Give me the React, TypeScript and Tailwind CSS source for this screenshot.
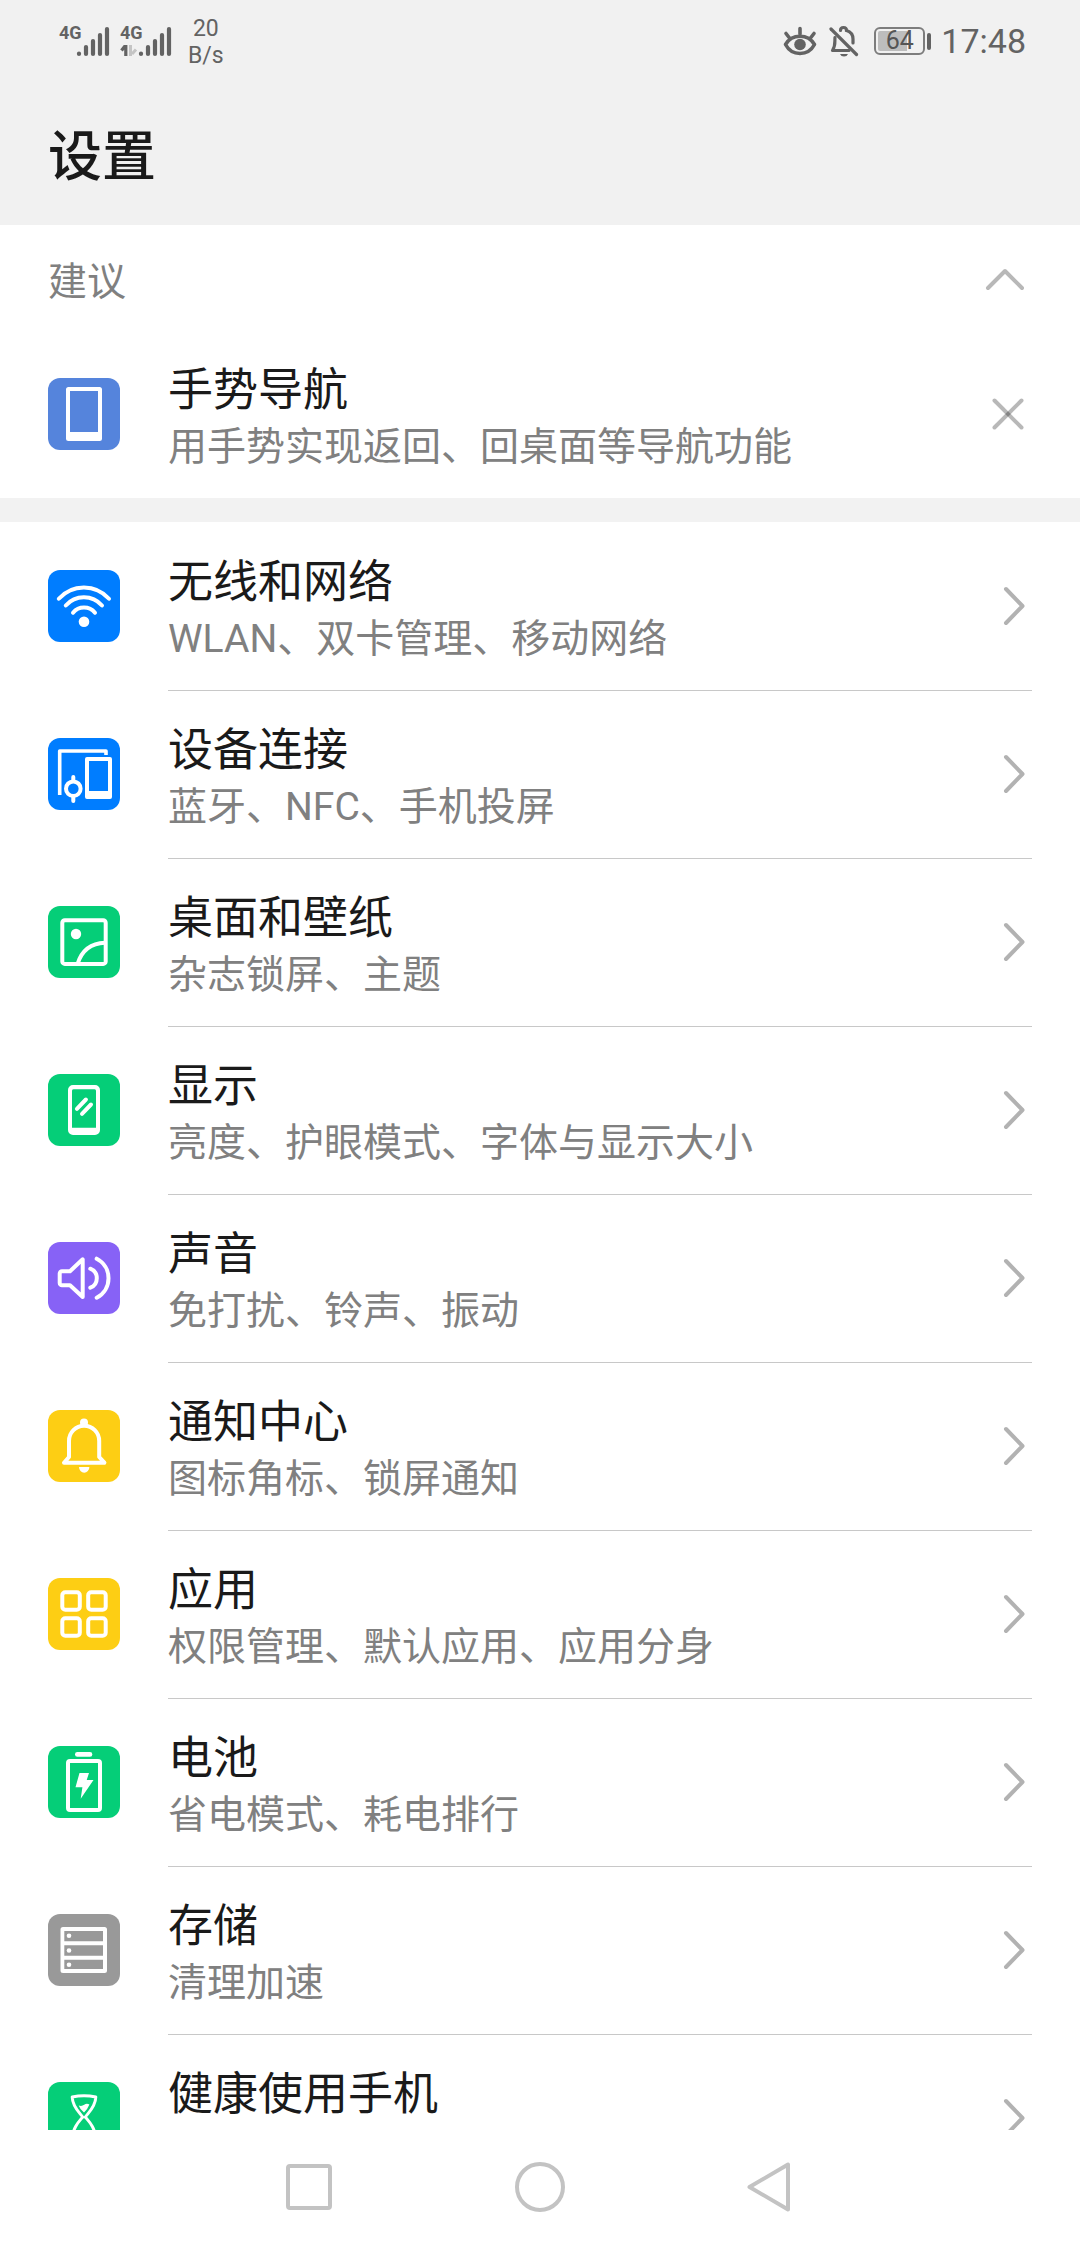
import type { ReactNode } from "react"

interface SettingItem {
  title: string
  summary?: string
  color: string
  icon: ReactNode
}

const WifiGlyph = () => (
  <>
    <path d="M10.8 28.7a33.5 33.5 0 0 1 50.2 0M17.8 35.5a24 24 0 0 1 36.2 0M25 42.7a14.2 14.2 0 0 1 22 0" />
    <circle cx="36" cy="51.7" r="5.3" fill="white" stroke="none" />
  </>
)

const DevicesGlyph = () => (
  <>
    <path d="M11.7 57V13H58v4" strokeWidth="3.6" strokeLinecap="butt" />
    <path
      d="M39 19h23a2 2 0 0 1 2 2v38a2 2 0 0 1-2 2H39a2 2 0 0 1-2-2V21a2 2 0 0 1 2-2ZM41 23v30h19V23Z"
      fill="white"
      stroke="none"
      fillRule="evenodd"
    />
    <circle cx="25.3" cy="50.7" r="7.3" />
    <path d="M25.3 39v4M25.3 59v4" />
  </>
)

const WallpaperGlyph = () => (
  <>
    <rect x="14.3" y="14.3" width="43.4" height="43.6" rx="2.5" />
    <circle cx="28" cy="28" r="5.2" fill="white" stroke="none" />
    <path d="M29.7 57.5Q36 37.5 57 36.7" />
  </>
)

const DisplayGlyph = () => (
  <>
    <path
      d="M25 11h22a5 5 0 0 1 5 5v40a5 5 0 0 1-5 5H25a5 5 0 0 1-5-5V16a5 5 0 0 1 5-5ZM25.5 15.3A1.5 1.5 0 0 0 24 17v36.7h24V17a1.5 1.5 0 0 0-1.5-1.7Z"
      fill="white"
      stroke="none"
      fillRule="evenodd"
    />
    <path d="M28.9 34.8l9-9.3M34 39.8l9-9.3" />
  </>
)

const SoundGlyph = () => (
  <>
    <path d="M14 29.3H22L34.7 17.3V55L22 43.3H14a2.3 2.3 0 0 1-2.3-2.3V31.6a2.3 2.3 0 0 1 2.3-2.3Z" />
    <path d="M42.3 26.7a10.2 10.2 0 0 1 0 19M48.7 16.7a22 22 0 0 1 0 39" />
  </>
)

const BellGlyph = () => (
  <>
    <path d="M16 52.7L21 47V31a15.1 15.3 0 0 1 30.2 0V47l5.2 5.7Z" />
    <path d="M31 57h10.4a5.2 5.7 0 0 1-10.4 0Z" fill="white" stroke="none" />
    <circle cx="36" cy="12.5" r="4" fill="white" stroke="none" />
  </>
)

const AppsGlyph = () => (
  <>
    <rect x="14.3" y="14.3" width="17.5" height="17.5" rx="3" />
    <rect x="40.2" y="14.3" width="17.5" height="17.5" rx="3" />
    <rect x="14.3" y="40.2" width="17.5" height="17.5" rx="3" />
    <rect x="40.2" y="40.2" width="17.5" height="17.5" rx="3" />
  </>
)

const BatteryGlyph = () => (
  <>
    <rect x="20" y="15" width="32" height="49" rx="2" />
    <rect x="27" y="6" width="17.3" height="4.7" rx="2.3" fill="white" stroke="none" />
    <path d="M31.5 27h9.5l-2.3 7h6.8L32.7 52.7l1.7-11.5h-6.9Z" fill="white" stroke="none" />
  </>
)

const StorageGlyph = () => (
  <>
    <path
      d="M15 13h41.5a2.5 2.5 0 0 1 2.5 2.5v41a2.5 2.5 0 0 1-2.5 2.5H15a2.5 2.5 0 0 1-2.5-2.5v-41A2.5 2.5 0 0 1 15 13ZM16.3 17v10.3H55V17ZM16.3 31.2v10.5H55V31.2ZM16.3 45.7V55H55v-9.3Z"
      fill="white"
      stroke="none"
      fillRule="evenodd"
    />
    <g fill="white" stroke="none">
      <circle cx="21" cy="21.8" r="2.3" />
      <circle cx="21" cy="36.5" r="2.3" />
      <circle cx="21" cy="50.7" r="2.3" />
    </g>
  </>
)

const HourglassGlyph = () => (
  <>
    <path
      d="M24.2 15Q36 12.5 47.8 15C47.5 25 40.5 30.5 37.3 35C41 39.5 47 45 47.8 57Q36 59.5 24.2 57C25 45 31 39.5 34.7 35C31.5 30.5 24.5 25 24.2 15Z"
      strokeWidth="3"
    />
    <path d="M30.7 23.5q3 1.2 5.5-.7t5.2-.3q-1.4 4-5.4 8-4-3-5.3-7Z" fill="white" stroke="none" />
  </>
)

const PhoneGlyph = () => (
  <path
    d="M20.5 9h31a2.5 2.5 0 0 1 2.5 2.5v49a2.5 2.5 0 0 1-2.5 2.5h-31a2.5 2.5 0 0 1-2.5-2.5v-49A2.5 2.5 0 0 1 20.5 9ZM22 13v41h28V13Z"
    fill="white"
    stroke="none"
    fillRule="evenodd"
  />
)

const items: SettingItem[] = [
  { title: "无线和网络", summary: "WLAN、双卡管理、移动网络", color: "bg-[#007dff]", icon: <WifiGlyph /> },
  { title: "设备连接", summary: "蓝牙、NFC、手机投屏", color: "bg-[#007dff]", icon: <DevicesGlyph /> },
  { title: "桌面和壁纸", summary: "杂志锁屏、主题", color: "bg-[#05ce78]", icon: <WallpaperGlyph /> },
  { title: "显示", summary: "亮度、护眼模式、字体与显示大小", color: "bg-[#05ce78]", icon: <DisplayGlyph /> },
  { title: "声音", summary: "免打扰、铃声、振动", color: "bg-[#8762f6]", icon: <SoundGlyph /> },
  { title: "通知中心", summary: "图标角标、锁屏通知", color: "bg-[#fdce14]", icon: <BellGlyph /> },
  { title: "应用", summary: "权限管理、默认应用、应用分身", color: "bg-[#fdce14]", icon: <AppsGlyph /> },
  { title: "电池", summary: "省电模式、耗电排行", color: "bg-[#05ce78]", icon: <BatteryGlyph /> },
  { title: "存储", summary: "清理加速", color: "bg-[#999999]", icon: <StorageGlyph /> },
  { title: "健康使用手机", color: "bg-[#05ce78]", icon: <HourglassGlyph /> },
]

function Tile({ color, children }: { color: string; children: ReactNode }) {
  return (
    <span className={`${color} size-[72px] shrink-0 rounded-xl`}>
      <svg
        viewBox="0 0 72 72"
        className="size-full"
        fill="none"
        stroke="white"
        strokeWidth="4"
        strokeLinecap="round"
        strokeLinejoin="round"
        aria-hidden="true"
      >
        {children}
      </svg>
    </span>
  )
}

function RowText({ title, summary }: { title: string; summary?: string }) {
  return (
    <span className="flex min-w-0 flex-1 flex-col pt-1.5">
      <span className="text-[45px] leading-[60px] text-[#1a1a1a]">{title}</span>
      <span className="min-h-[52px] text-[39px] leading-[52px] text-[#808080]">{summary}</span>
    </span>
  )
}

function SignalBars() {
  return (
    <svg viewBox="0 0 34 32" className="h-8 w-[34px]" stroke="#636363" strokeWidth="4.2" strokeLinecap="round" aria-hidden="true">
      <path d="M3 28.500v.5M10 22v7M17 16v13M24 10v19M31 4v25" />
    </svg>
  )
}

function StatusBar() {
  return (
    <div className="flex h-[82px] items-center justify-between pr-[54px] pl-[59px] text-[#636363]">
      <div className="flex items-center">
        <div className="flex items-start">
          <span className="w-[17px] font-['Liberation_Sans_Narrow','Roboto'] text-[18px] leading-4 font-bold">4G</span>
          <SignalBars />
        </div>
        <div className="ml-[10px] flex items-start">
          <span className="flex w-[18px] flex-col">
            <span className="font-['Liberation_Sans_Narrow','Roboto'] text-[18px] leading-4 font-bold">4G</span>
            <svg viewBox="0 0 18 16" className="h-4 w-[18px]" aria-hidden="true">
              <path d="M5.8 4v11M1.5 9.5L5 5" fill="none" stroke="#636363" strokeWidth="3.2" />
              <path d="M10.5 4v11M12 13l4-4.500" fill="none" stroke="#c4c4c4" strokeWidth="3" />
            </svg>
          </span>
          <SignalBars />
        </div>
        <div className="ml-4 flex flex-col items-center pt-0.5 text-[23px] leading-[27px]">
          <span>20</span>
          <span>B/s</span>
        </div>
      </div>

      <div className="flex items-center">
        <svg viewBox="0 0 34 32" className="h-8 w-[34px]" fill="none" stroke="#636363" strokeWidth="3.6" strokeLinecap="round" aria-hidden="true">
          <path d="M2.5 19.5C9 8.5 25 8.5 31.5 19.5C25 31.5 9 31.5 2.5 19.5Z" strokeLinejoin="round" />
          <path d="M17 3.5V9M3 8.5l3.5 4.5M31 8.5L27.5 13" />
          <circle cx="17" cy="19.5" r="5.8" fill="#636363" stroke="none" />
        </svg>
        <svg viewBox="0 0 30 32" className="ml-3 h-8 w-[30px]" fill="none" stroke="#636363" strokeWidth="3.2" strokeLinecap="round" aria-hidden="true">
          <path d="M2 4L27.5 29.5" />
          <path d="M6 12.5C5.5 16 7 20 3.5 25.5H20" strokeLinejoin="round" />
          <path d="M11.5 5.5Q11.5 2.5 14.5 2.5T17.5 5.5Q24 7.5 24 14v4" />
          <path d="M11 29h8q-1 2.5-4 2.5T11 29Z" fill="#636363" stroke="none" />
        </svg>
        <div className="ml-[15px] flex items-center gap-0.5">
          <div className="flex h-7 w-[51px] items-center justify-center rounded-md border-2 border-[#7d7d7d] bg-linear-to-r from-[#bdbdbd] from-65% to-transparent to-65% bg-clip-content p-0.5 text-[25px] leading-6 text-[#555555]">
            64
          </div>
          <div className="h-[17px] w-1 rounded-xs bg-[#636363]" />
        </div>
        <time className="ml-2.5 text-[34px] leading-10">17:48</time>
      </div>
    </div>
  )
}

function NavBar() {
  const shape = "size-[50px]"
  return (
    <nav className="flex h-[114px] shrink-0 items-center justify-center gap-[181px] bg-white">
      <button type="button" aria-label="最近任务">
        <svg viewBox="0 0 50 50" className={shape} fill="none" stroke="#c3c3c3" strokeWidth="4">
          <rect x="4" y="4" width="42" height="42" rx="2" />
        </svg>
      </button>
      <button type="button" aria-label="主屏幕">
        <svg viewBox="0 0 50 50" className={shape} fill="none" stroke="#c3c3c3" strokeWidth="4">
          <circle cx="25" cy="25" r="23" />
        </svg>
      </button>
      <button type="button" aria-label="返回">
        <svg viewBox="0 0 50 50" className={shape} fill="none" stroke="#c3c3c3" strokeWidth="4" strokeLinejoin="round">
          <path d="M42 2.5V47.5L3.5 25Z" />
        </svg>
      </button>
    </nav>
  )
}

export default function App() {
  return (
    <div className="flex h-screen flex-col overflow-hidden bg-white font-['Roboto','Noto_Sans_CJK_SC',sans-serif]">
      <header className="shrink-0 bg-[#f1f1f1]">
        <StatusBar />
        <h1 className="px-12 pt-10 pb-[31px] text-[54px] leading-[72px] font-medium text-[#1a1a1a]">设置</h1>
      </header>

      <main className="min-h-0 flex-1 overflow-hidden">
        {/* Suggestions */}
        <section>
          <div className="flex h-[105px] items-center justify-between pt-0.5 pr-[55px] pl-12">
            <h2 className="pt-1.5 text-[39px] leading-[54px] text-[#808080]">建议</h2>
            <button type="button" aria-label="收起">
              <svg viewBox="0 0 40 24" className="h-6 w-10" fill="none" stroke="#b8b8b8" strokeWidth="4" strokeLinecap="round" strokeLinejoin="round">
                <path d="M3 21L20 4l17 17" />
              </svg>
            </button>
          </div>
          <div className="flex h-[168px] items-center gap-12 pr-14 pl-12">
            <Tile color="bg-[#5584dc]">
              <PhoneGlyph />
            </Tile>
            <RowText title="手势导航" summary="用手势实现返回、回桌面等导航功能" />
            <button type="button" aria-label="关闭">
              <svg viewBox="0 0 32 32" className="size-8" fill="none" stroke="#000000" strokeOpacity="0.28" strokeWidth="4" strokeLinecap="round">
                <path d="M2.5 2.5l27 27" />
                <path d="M29.5 2.5l-27 27" />
              </svg>
            </button>
          </div>
        </section>

        <div className="h-6 bg-[#f2f2f2]" />

        <ul>
          {items.map((item, index) => (
            <li key={item.title}>
              <a href="#" className="flex h-[168px] items-center gap-12 px-12">
                <Tile color={item.color}>{item.icon}</Tile>
                <span
                  className={`flex h-full min-w-0 flex-1 items-center border-y border-b-transparent pr-[7px] ${index > 0 ? "border-t-[#c8c8c8]" : "border-t-transparent"}`}
                >
                  <RowText title={item.title} summary={item.summary} />
                  <svg
                    viewBox="0 0 22 40"
                    className="h-10 w-[22px] shrink-0"
                    fill="none"
                    stroke="#b2b2b2"
                    strokeWidth="4"
                    strokeLinecap="round"
                    strokeLinejoin="round"
                    aria-hidden="true"
                  >
                    <path d="M3 3l16.5 17L3 37" />
                  </svg>
                </span>
              </a>
            </li>
          ))}
        </ul>
      </main>

      <NavBar />
    </div>
  )
}
